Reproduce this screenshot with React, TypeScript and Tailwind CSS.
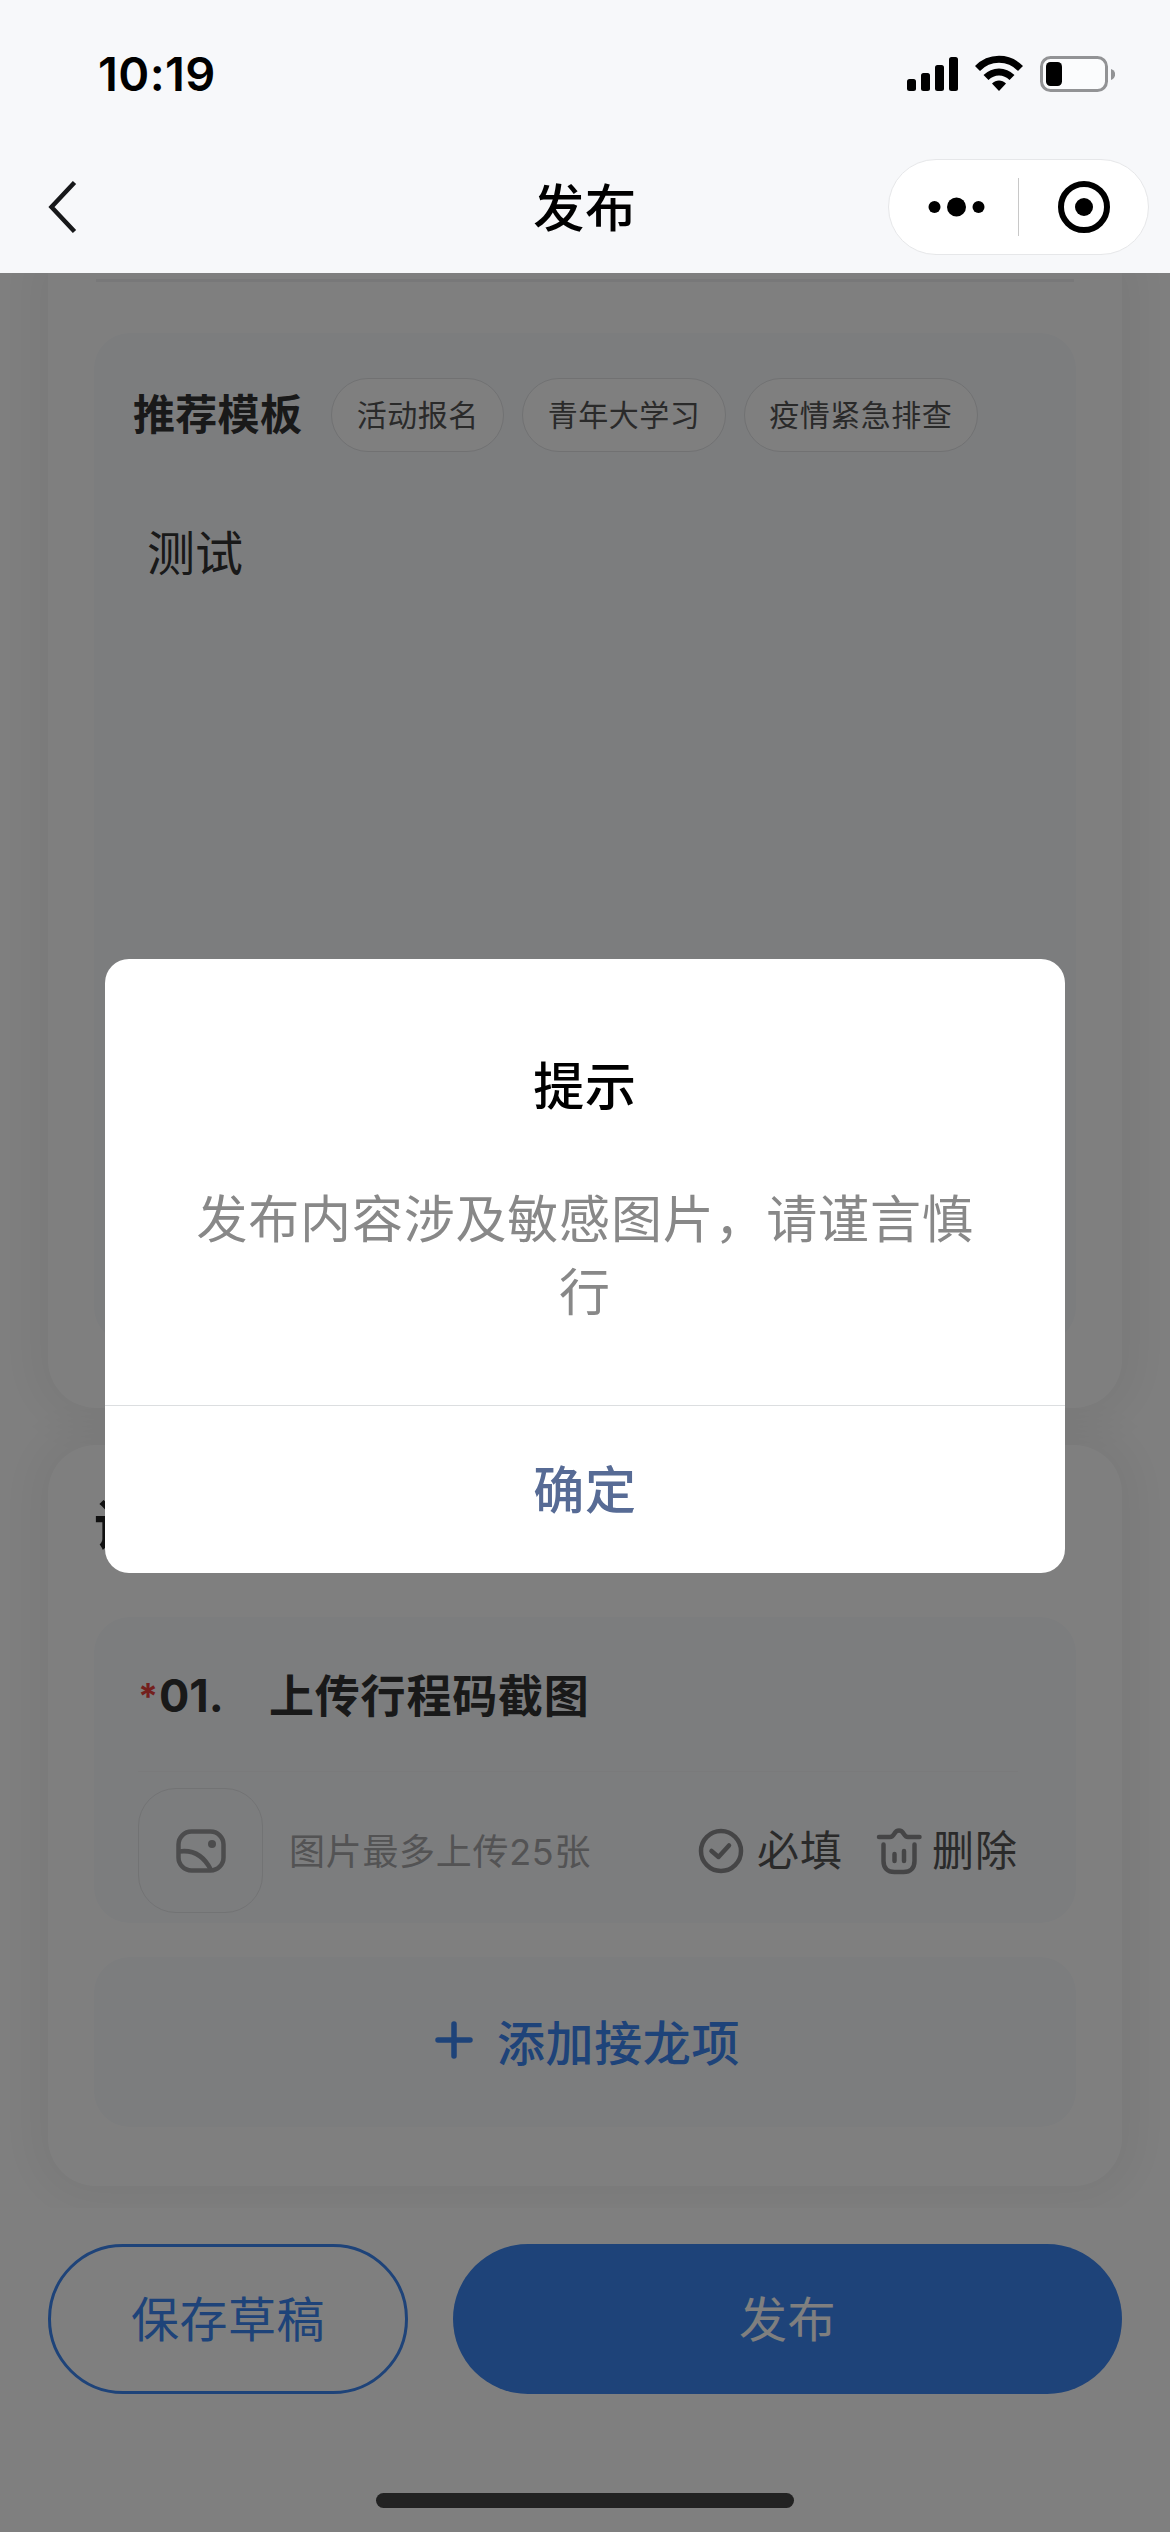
import type { ReactNode } from 'react';

const templates = ['活动报名', '青年大学习', '疫情紧急排查'];

function StatusBar() {
  return (
    <div className="flex h-[141px] items-start justify-between pl-[98px] pr-[55px]">
      <span className="mt-[46px] font-['Inter'] text-[47px] leading-[56px] font-semibold tracking-[0.4px] text-black">
        10:19
      </span>
      <div className="mt-[55px] flex items-start">
        <svg className="mt-0.5" width="51" height="34" viewBox="0 0 51 34">
          <rect x="0" y="22" width="9" height="12" rx="2.5" />
          <rect x="14" y="16" width="9" height="18" rx="2.5" />
          <rect x="28" y="8" width="9" height="26" rx="2.5" />
          <rect x="42" y="0" width="9" height="34" rx="2.5" />
        </svg>
        <svg className="ml-[17px]" width="48" height="36" viewBox="0 0 48 36" fill="none" stroke="#000">
          <path d="M2.5 13.5C14.5 1.2 33.5 1.2 45.5 13.5" strokeWidth="7" />
          <path d="M11 22.5C18.5 15 29.500 15 37 22.500" strokeWidth="7" />
          <path d="M24 36l-7-7.500c4-4 10-4 14 0z" fill="#000" stroke="none" />
        </svg>
        <svg className="ml-[17px]" width="75" height="38" viewBox="0 0 75 38">
          <rect x="1.500" y="2.500" width="65" height="33" rx="9" fill="#fbfcfd" stroke="#929395" strokeWidth="3" />
          <rect x="6" y="7" width="16" height="24" rx="4.500" />
          <path d="M71 14c5.500 1.500 5.500 9 0 11z" fill="#929395" />
        </svg>
      </div>
    </div>
  );
}

function NavBar() {
  return (
    <div className="grid h-[132px] grid-cols-3 items-center pl-[48px] pr-[21px]">
      <svg width="30" height="52" viewBox="0 0 30 52" fill="none" stroke="#17181a" strokeWidth="4.500">
        <path d="M26.500 1.500L3.500 26l23 24.500" />
      </svg>
      <h1 className="mt-[4px] -ml-[27px] text-center text-[51px] font-medium tracking-[0.8px] text-black">发布</h1>
      <div className="flex h-[96px] w-[261px] items-center justify-self-end rounded-full border border-[#e6e7e9] bg-white">
        <svg className="ml-[39px]" width="57" height="20" viewBox="0 0 57 20">
          <circle cx="6.500" cy="10" r="6" />
          <circle cx="28.500" cy="10" r="9.500" />
          <circle cx="50.500" cy="10" r="6" />
        </svg>
        <span className="ml-[33px] h-[58px] w-px bg-[#c8c8c8]" />
        <svg className="ml-[38px]" width="54" height="54" viewBox="0 0 54 54" fill="none">
          <circle cx="27" cy="27" r="23" stroke="#000" strokeWidth="6" />
          <circle cx="27" cy="27" r="9" fill="#000" />
        </svg>
      </div>
    </div>
  );
}

function Card({ className, children }: { className: string; children: ReactNode }) {
  return (
    <section className={`mx-12 bg-white px-[46px] shadow-[0_0_40px_20px_rgba(0,0,0,0.045)] ${className}`}>
      {children}
    </section>
  );
}

function ImageIcon() {
  return (
    <svg width="50" height="44" viewBox="0 0 50 44" fill="none" stroke="#98999b" strokeWidth="4.500">
      <rect x="2.500" y="2.500" width="45" height="39" rx="13" />
      <path d="M3 22.500C17 20.500 28 27 35 41" />
      <circle cx="36" cy="15" r="4" fill="#98999b" stroke="none" />
    </svg>
  );
}

function CheckIcon() {
  return (
    <svg width="46" height="46" viewBox="0 0 46 46" fill="none" stroke="#8a8b8d" strokeWidth="4.500" strokeLinecap="round" strokeLinejoin="round">
      <circle cx="23" cy="23" r="20" />
      <path d="M13.500 23l7 6L31 17.500" />
    </svg>
  );
}

function TrashIcon() {
  return (
    <svg width="46" height="48" viewBox="0 0 46 48" fill="none" stroke="#8a8b8d" strokeWidth="4.500" strokeLinecap="round" strokeLinejoin="round">
      <path d="M3 10H14c5 0 3.500-6.500 9-6.500S27 10 32 10h11.500" />
      <path d="M7.500 17.500V34c0 7 4 11 11 11h9c7 0 11-4 11-11V17.500" />
      <path d="M18.500 27v7M28 24v10" />
    </svg>
  );
}

function DescriptionCard() {
  return (
    <Card className="h-[1135px] rounded-b-[48px] pt-[6px]">
      <div className="mx-[2px] h-[3px] bg-[#f0f1f3]" />
      <div className="mt-[51px] h-[1010px] rounded-[36px] bg-[#f8fafd] pt-[45px] pl-[39px]">
        <div className="flex items-center gap-[18px]">
          <h2 className="mr-[11px] text-[42px] leading-[74px] font-bold tracking-[0.3px] text-[#333]">推荐模板</h2>
          {templates.map(name => (
            <button
              key={name}
              type="button"
              className="h-[74px] rounded-full border border-[#e2e3e5] bg-white px-[24.5px] text-[30px] leading-[68px] tracking-[0.5px] text-[#555]"
            >
              {name}
            </button>
          ))}
        </div>
        <p className="mt-[65px] ml-[14px] text-[48px] leading-[74px] text-[#333]">测试</p>
      </div>
    </Card>
  );
}

function ItemsCard() {
  return (
    <Card className="relative mt-[37px] h-[741px] rounded-[48px] pt-[40px]">
      <h2 className="text-[54px] leading-[84px] font-bold text-[#222]">设置接龙项</h2>
      <div className="mt-[48px] h-[306px] rounded-[36px] bg-[#f8fafd] px-[44px] pt-[40px]">
        <div className="flex h-[78px] items-center text-[45px] font-bold text-[#333]">
          <span className="w-[21px] font-['Inter'] text-[36px] font-bold text-[#e8413c]">*</span>
          <span className="w-[110px] font-['Inter'] text-[45px]">01.</span>
          <span className="mt-[2px] tracking-[0.8px]">上传行程码截图</span>
        </div>
        <div className="mt-[36px] mr-[14px] h-px bg-[#f4f5f7]" />
        <div className="mt-[16px] flex h-[125px] items-center">
          <div className="flex h-[125px] w-[125px] shrink-0 items-center justify-center rounded-[38px] border border-[#e5e6e8]">
            <ImageIcon />
          </div>
          <span className="mt-[2px] ml-[26px] w-[409px] text-[36px] tracking-[0.7px] text-[#a6a6a8]">图片最多上传25张</span>
          <CheckIcon />
          <span className="ml-[13px] w-[119px] text-[42px] tracking-[1px] text-[#555]">必填</span>
          <TrashIcon />
          <span className="ml-[10px] text-[42px] tracking-[1px] text-[#555]">删除</span>
        </div>
      </div>
      <button
        type="button"
        className="mt-[34px] flex h-[170px] w-full items-center justify-center gap-6 rounded-[36px] bg-[#f8fafd] pt-[3px] pl-[5px] text-[48px] font-medium tracking-[0.6px] text-[#3c86f2]"
      >
        <svg className="-mt-[7px]" width="38" height="38" viewBox="0 0 38 38" stroke="#3c86f2" strokeWidth="5.500" strokeLinecap="round">
          <path d="M19 3v32M3 19h32" />
        </svg>
        添加接龙项
      </button>
    </Card>
  );
}

function Footer() {
  return (
    <div className="relative h-[324px] bg-white px-12 pt-[36px]">
      <div className="flex h-[150px] gap-[45px] text-[48px] tracking-[0.5px]">
        <button type="button" className="w-[360px] rounded-full border-3 border-[#3c86f2] pt-px text-[#3c86f2]">
          保存草稿
        </button>
        <button type="button" className="flex-1 rounded-full bg-[#3c86f2] pt-px text-white">
          发布
        </button>
      </div>
    </div>
  );
}

function AlertDialog() {
  return (
    <div className="absolute inset-x-0 top-[273px] bottom-0 bg-black/50 pt-[686px]">
      <div role="dialog" className="mx-auto flex h-[614px] w-[960px] flex-col rounded-[24px] bg-white text-center text-[51px] tracking-[0.8px]">
        <h3 className="mt-[92px] leading-[72px] font-medium text-black">提示</h3>
        <p className="mt-[60px] px-[84px] leading-[73px] text-[#888]">发布内容涉及敏感图片，请谨言慎行</p>
        <button type="button" className="mt-auto h-[168px] border-t border-[#dcdee0] pt-[4px] font-medium text-[#576b95]">
          确定
        </button>
      </div>
    </div>
  );
}

export default function App() {
  return (
    <div className="relative flex h-[2532px] w-[1170px] flex-col overflow-hidden bg-white font-['Inter','Noto_Sans_CJK_SC',sans-serif]">
      <header className="relative z-10 h-[273px] shrink-0 bg-[#f7f8fa]">
        <StatusBar />
        <NavBar />
      </header>
      <main className="h-[1935px] shrink-0">
        <DescriptionCard />
        <ItemsCard />
      </main>
      <Footer />
      <AlertDialog />
      <div className="absolute bottom-[24px] left-[376px] h-[15px] w-[418px] rounded-full bg-[#222]" />
    </div>
  );
}
